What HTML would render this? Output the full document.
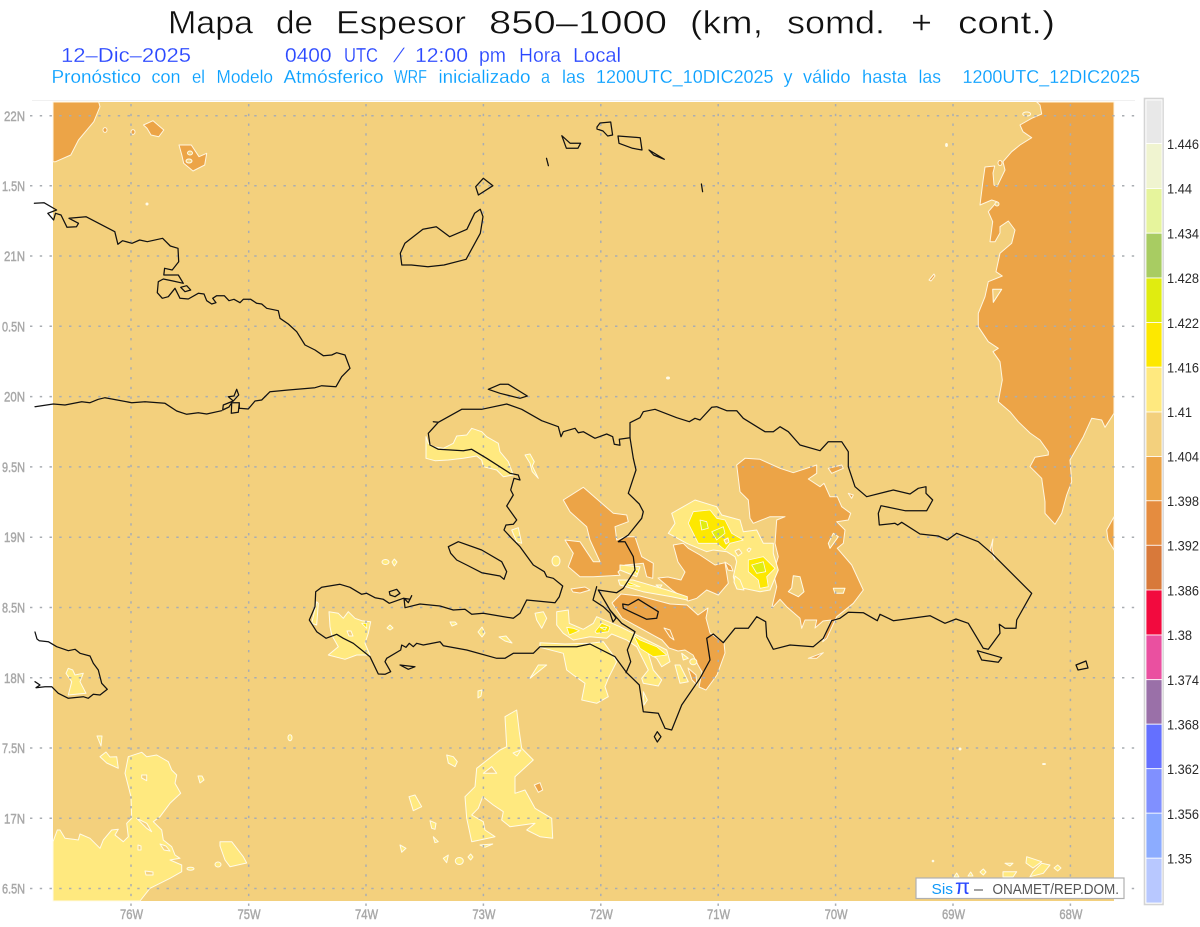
<!DOCTYPE html>
<html lang="es"><head><meta charset="utf-8"><title>Mapa de Espesor 850-1000</title>
<style>
html,body{margin:0;padding:0;background:#fff}
svg{display:block}
text{font-family:"Liberation Sans",sans-serif}
.ti{font-size:32px;fill:#111;stroke:#fff;stroke-width:.45}
.l2{font-size:20px;fill:#2a48ff;stroke:#fff;stroke-width:.2}
.l3{font-size:18px;fill:#0aa0ff;stroke:#fff;stroke-width:.15}
.g{font-size:14px;fill:#a8a8a8;stroke:#a8a8a8;stroke-width:.45}
.c{font-size:13.5px;fill:#2a2a2a}
.o{fill:#eca447;stroke:#fff6e0;stroke-width:1;stroke-linejoin:round}
.p{fill:#ffe97f;stroke:#fffbe8;stroke-width:1;stroke-linejoin:round}
.b{fill:#f3d07d;stroke:#fffbe8;stroke-width:1;stroke-linejoin:round}
.y{fill:#fde800;stroke:#fffbe8;stroke-width:.8;stroke-linejoin:round}
.m{fill:#e0ec10;stroke:#fffbe8;stroke-width:.8;stroke-linejoin:round}
.k{fill:none;stroke:#111;stroke-width:1.25;stroke-linejoin:round;stroke-linecap:round}
.gr{stroke:#a9adb2;stroke-width:1.5;stroke-dasharray:2.4 7.35;fill:none}
</style></head><body>
<svg xmlns="http://www.w3.org/2000/svg" width="1200" height="927" viewBox="0 0 1200 927">
<rect width="1200" height="927" fill="#fff"/>
<path d="M32 100.5H1135" stroke="#f0f0f0" fill="none"/>
<rect x="53" y="102" width="1061" height="799" fill="#f3d07d"/>

<!-- East orange -->
<polygon class="o" points="1036.7,102 1040,105 1041.7,114 1031.7,118.3 1020,125 1023,131.7 1031.7,137.7 1020,145 1011.7,151.7 1003,161.7 1005,170 997,186.7 994,185 993,173 994.7,166 985,167 982.7,183.3 980,205 991.7,200 997,201.7 988.3,211.7 992.7,221.7 990,241.7 995,241.7 1000,233 1000,226.7 1008.3,221 1015,230 1011.7,243.3 1000,253.3 996,271.7 1002.3,276 988.3,281.7 985,296.7 978.3,313.3 978.3,326.7 988.3,341.7 998.3,348.3 993,351.7 1000,361.7 1002.3,380 998.3,401.7 1010,411.7 1018.3,421.7 1030,433 1040,440 1048.3,451.7 1048.3,455 1035,457.3 1030,466.7 1041.7,478.3 1045,501.7 1045,513.3 1055,524.3 1061.7,513.3 1066.7,495 1071.7,481.7 1070,460 1083.3,436.7 1091.7,418.3 1101.7,420 1105,427.3 1114,413.3 1114,102"/>
<polygon class="b" points="992.7,289.3 1001.7,289.3 993.3,302.3"/>
<polygon class="o" points="1114,516.7 1106.7,530 1108,540 1114,550"/>
<ellipse class="b" cx="1026.7" cy="114" rx="4" ry="2"/>
<ellipse class="o" cx="1000" cy="163" rx="2" ry="2.5"/>
<polygon class="o" points="929,280 934,274 935,276 931,281"/>
<ellipse class="b" cx="997" cy="204" rx="2" ry="2"/>

<!-- Top-left orange -->
<polygon class="o" points="53,102 98.7,102 100,106.7 93.8,121.7 78.5,140 70.8,155 55.5,161.7 53,161.7"/>
<polygon class="o" points="143.5,125 153,120.7 163.8,130 158.8,136.7 151,135 147,128.3"/>
<polygon class="o" points="179,145 191.3,145 199,156.7 206.7,153.3 204.7,165 193,171 183.7,163.3 181.8,155"/>
<ellipse class="b" cx="190" cy="153" rx="2.5" ry="2"/><ellipse class="b" cx="189" cy="161" rx="3" ry="2"/>
<ellipse class="o" cx="133" cy="132" rx="2" ry="2.4"/><ellipse class="o" cx="105" cy="130" rx="2" ry="2.4"/>

<!-- Central DR orange -->
<polygon class="o" points="736.7,465 745,458.3 760,459.3 780,468.3 793.3,472.7 816.7,465 816.7,473.3 808.3,479 820,486.7 824,483.3 830,496.7 837.3,496.7 841.7,506.7 850.7,513.3 848.3,520 836.7,521.7 845,530 843.3,543.3 837.3,548.3 851.7,565 863.3,590 853.3,603.3 836.7,616.7 826.7,638.3 822.7,641.7 831,620 823,621 815,628 816.7,620 805,620 801.7,628.3 800,618.3 786.7,606.7 780,599.3 771.7,608.3 776.7,586.7 773.3,573.3 778.3,556.7 775,543.3 776.7,520 785,516.7 770,516.7 753.3,523.3 750,518.3 748.3,500 740,491.7"/>
<polygon class="b" points="791.7,588 793.3,575.7 800,576.7 804,591.7 798.3,596.7 788.3,591.7"/>
<polygon class="b" points="833.3,588.3 845,588.3 843.3,593.3 835,593.3"/>
<polygon class="b" points="828.3,543.3 833.3,533.3 838.3,536.7 830,548.3"/>
<polygon class="o" points="848.3,493.3 853.3,495 851.7,498.3"/>
<polygon class="o" points="828.3,468.3 841.7,465 843.3,468.3 831.7,473.3"/>
<polygon class="o" points="993,539 990,550 995,560 992,548"/>
<polygon class="o" points="808.3,658.3 823.3,652.7 816.7,658.3"/>

<!-- Haiti/border orange -->
<polygon class="o" points="563.3,500 583.3,487.3 600,501.7 613.3,513.3 626.7,515 628.3,521.7 615,526.7 616.7,540 625,536.7 635,536.7 641.7,556.7 653.3,563.3 652.7,578.3 646.7,576.7 643.3,563.3 625,565 618,572 620,575.3 593.3,576.7 580,576.7 568.3,566.7 573.3,553.3 565,540 580,541.7 593.3,561.7 600,561.7 590,540 586.7,526.7 570,511.7"/>
<polygon class="o" points="673.3,545 683.3,543.3 688.3,548.3 700,555 715,565 725,562.7 728.3,583.3 718.3,595 706.7,590 696.7,598.3 688,601 672,590 658,578 668,577 681,580 685,572 678,562"/>
<polygon class="o" points="612,603 621,594 640,596 655,600 670,604 687,605 698,615 708,608 706,618 710,633 724,643 725,653 717,675 706,690 699,687 702,672 698,665 693,655 685,650 678,651 669,648 662,640 640,628 622,618"/>
<polygon class="o" points="571,589 585,587 590,590 580,593 573,592"/>
<polygon class="o" points="688,668 696,675 697,685 692,680"/>
<polygon class="o" points="664,628 670,630 674,640 670,637"/>

<!-- Yellow cluster -->
<polygon class="p" points="671.7,513.3 695,500 716.7,506.7 721.7,515 740,520 743.3,531.7 756.7,530 763.3,543.3 773.3,543.3 773.3,553.3 778.3,570 770,590 760,591.7 743.3,588.3 736.7,588.3 733.3,576.7 736.7,561.7 735,556.7 726.7,551.7 713.3,550 706.7,551.7 686.7,543.3 668.3,533.3 675,523.3"/>
<polygon class="y" points="693.3,511.7 710,510 716.7,518.3 725,520 731.7,533.3 743.3,540 730,543.3 725,550 716.7,543.3 698.3,543.3 688.3,523.3"/>
<polygon class="m" points="700,520 706.7,521.7 708.3,528.3 701.7,530"/>
<polygon class="m" points="711.7,531.7 723.3,526.7 725,533.3 716.7,540"/>
<polygon class="y" points="748.3,560 763.3,556.7 775,568.3 766.7,576.7 768.3,586.7 760,588.3 758.3,580 748.3,571.7"/>
<polygon class="m" points="751.7,565 763.3,561.7 765.7,571.7 756.7,573.3"/>
<polygon class="p" points="735,576 740,580 744,590 737,589 734,582"/>
<polygon class="b" points="735,551 739,549 742,553 738,556"/>
<polygon class="b" points="749,548 751,549 749,552 747,550"/>
<polygon class="b" points="724,540 728,538 729,542 726,544"/>
<polygon class="o" points="725,562 731,566 733,571 728,570"/>

<!-- Haiti/S pale -->
<polygon class="p" points="426,436.7 426,458.3 435,460.7 448.3,460 463.3,458.3 476.7,456 481.7,460 483.3,466.7 496.7,470 503.3,476.7 513.3,475 508.3,461.7 500,451.7 498.3,443.3 486.7,436.7 481.7,431.7 471.7,428.3 466.7,435 456.7,436 453.3,443.3 443.3,448.3 433.3,446.7 428.3,443.3"/>
<polygon class="p" points="525,455 530,454 534.3,461.7 532.3,466 538.3,478.3 532.3,471.7 530,463.3"/>
<polygon class="p" points="511.7,530 518.3,527.7 521.7,543.3 516.7,541.7"/>
<ellipse class="p" cx="556" cy="561" rx="4" ry="5"/>
<ellipse class="p" cx="385.5" cy="562" rx="3.5" ry="2.5"/><polygon class="p" points="394.3,559 397,562 394.3,566 392,562"/>
<polygon class="p" points="329,611.7 338.3,613.3 343.3,618.3 348.3,611.7 355,618.3 361.7,620.7 370.7,621.7 368.3,633.3 365,643.3 370,655 356.7,655 345,659.3 328.3,655 338.3,646.7 331.7,635 330,626.7"/>
<polygon class="b" points="347,631 351,631 353,636 349,636"/>
<polygon class="p" points="311.7,623.3 316.7,601.7 318.3,603.3 316.7,625"/>
<polygon class="y" points="361.7,623.3 366.7,623.3 366.7,628.3"/>
<polygon class="p" points="450,622 455,622 457,624 452,626"/>
<polygon class="p" points="390,625 393,628 390,630 387,628"/>
<polygon class="p" points="478,632 482,627 485,633 482,637"/>
<polygon class="p" points="535,613.3 543.3,611.7 546.7,618.3 541.7,628.3 536.7,620"/>
<polygon class="p" points="499,637 506,636 512,643 505,641"/>
<polygon class="p" points="530,678.3 546.7,665 538.3,665"/>
<polygon class="p" points="556.7,611.7 568.3,610 569.3,623.3 583.3,629.3 593.3,623.3 596.7,616.7 608.3,621.7 620,626.7 633.3,633.3 666.7,650 670,661.7 661.7,666.7 656.7,658.3 648.3,653.3 653.3,670 661.7,680 658.3,686 643.3,683.3 641.7,678.3 648.3,670 636.7,646.7 626.7,640 611.7,634 606.7,638.3 590,636.7 573.3,640 563.3,633.3 556.7,625"/>
<polygon class="p" points="540,642.7 565,644 590,643.3 603.3,641.7 611.7,653.3 616.7,661.7 608.3,678.3 605,686.7 608.3,696.7 596.7,703.3 581.7,700 585,683.3 573.3,675 566.7,670 563.3,653.3 540,647.3"/>
<polygon class="y" points="566.7,627.3 573.3,628.3 579.3,630.7 569.3,635"/>
<polygon class="y" points="595,631.7 601.7,623.3 610,626.7 608.3,631.7 596.7,633.3"/>
<polygon class="m" points="600,627.3 606.7,627.3 605,630"/>
<polygon class="y" points="633.3,635 640,640 656.7,646.7 666.7,655 653.3,656.7 640,648.3"/>
<polygon class="p" points="643.3,691.7 647.3,700 644,705"/>
<polygon class="p" points="675,665 680,665 688.3,681.7 680,683.3"/>
<polygon class="p" points="681.7,653.3 688.3,658.3 683.3,660"/>
<ellipse class="p" cx="693.3" cy="661.7" rx="3.5" ry="3"/>
<polygon class="p" points="618.3,580 633,580 667,590 687.3,596.7 687.3,600 671.7,596.7 643,591.7 620,585"/>
<polygon class="y" points="626.7,581.7 640,586.7 628.3,585"/>
<polygon class="p" points="620,565 640,566.7 636.7,576.7 620,570"/>
<polygon class="y" points="634,570 639,570 637,574"/>
<polygon class="p" points="656,585 662,585 660,588"/>

<!-- South pale -->
<polygon class="p" points="505,716.7 516.7,710 519.3,731.7 521.7,748.3 533.3,760 515,776.7 515,793.3 525,790 535,808.3 551.7,818.3 552.7,838.3 540,836.7 526.7,830 535,823.3 510,826.7 501.7,820 503.3,811.7 493.3,805 482.7,796.7 478.3,808.3 471.7,815 483.3,821.7 485,830 495,836.7 471.7,841.7 466.7,818.3 465,796.7 475,786.7 476.7,768.3 500,750 506.7,746.7"/>
<polygon class="b" points="483.3,773.3 491.7,766.7 496.7,773.3"/>
<polygon class="o" points="534.3,785 540,782.7 542.7,790 538.3,792.3"/>
<polygon class="p" points="409,796.7 415,795 421.7,806.7 413.3,810.7"/>
<polygon class="p" points="446.7,755 453.3,756.7 457.3,761.7 455,766.7 448.3,763"/>
<polygon class="p" points="430,820.7 436,823.3 435,829.3 431.7,828.3"/>
<polygon class="p" points="433.3,836.7 438.3,841.7 435,842.7"/>
<polygon class="p" points="400,845 406,848.3 401.7,852.3"/>
<polygon class="p" points="443.3,858.3 448.3,855 446.7,862.7"/>
<ellipse class="p" cx="459.3" cy="861" rx="4" ry="3.5"/>
<polygon class="p" points="470.7,854 473,857 470.7,860 468,857"/>
<polygon class="p" points="480,845 492.7,844 485,847.3"/>
<polygon class="p" points="478,691 482,690 481,696 478,698"/>
<polygon class="p" points="513,753 517,756 521,750"/>

<!-- SW pale -->
<polygon class="p" points="53,901 53,841.7 57.3,830 60,830 65,838.3 73.3,839.3 78.3,840 80,834 90,838.3 100,848.3 103.3,840 111.7,830 118.3,829.3 115,835 123.3,841.7 128.3,836.7 126.7,823.3 131.7,818.3 131,796.7 125,773.3 128.3,756.7 141.7,752.3 146.7,756.7 156.7,755 168.3,761.7 171.7,770 176.7,775 175,783.3 180.7,793.3 170,803.3 160,816.7 153.3,821.7 161.7,830 163.3,840 171.7,846.7 175,855 180,858.3 170,860 181.7,865 181.7,871.7 170,878.3 150,888.3 140,901"/>
<polygon class="b" points="136.7,818.3 146.7,823.3 151.7,831.7 146.7,828.3"/>
<polygon class="b" points="141.7,775 146.7,775 146.7,780.7 141.7,778"/>
<polygon class="b" points="145,871 153,872 153,875 146,875"/>
<polygon class="b" points="138,845 141,846 141,850 138,850"/>
<polygon class="b" points="160,844 166,846 170,851 164,850"/>
<polygon class="p" points="220,841.7 231.7,841.7 243.3,856.7 246.7,863 230,866.7 225,860 220,846"/>
<ellipse class="p" cx="218" cy="864.5" rx="3" ry="2.5"/>
<ellipse class="p" cx="290" cy="737.7" rx="2" ry="3"/>
<polygon class="p" points="198,776 202,776 204,780 200,783"/>
<polygon class="p" points="100,756.7 106,752 110,757 116.7,756.7 118.3,768.3 106.7,763"/>
<polygon class="p" points="97,736 102,736 101,746"/>
<ellipse class="p" cx="190.5" cy="868.7" rx="3.5" ry="1.5"/>
<polygon class="p" points="68.3,668.3 72.7,670 75,675 83.3,673.3 80,681.7 86,693.3 68.3,695 71.7,681.7 66,673.3"/>

<!-- SE pale bits -->
<polygon class="p" points="1026.7,856.7 1041.7,861.7 1033,868 1026,863"/>
<polygon class="p" points="1041.7,863.3 1050,865 1043.3,873.3 1030,876.7 1033,871.7"/>
<polygon class="p" points="1005,863.3 1013,863.3 1010,866"/>
<polygon class="p" points="1003,871.7 1016.7,871.7 1013,877 1003,877"/>
<polygon class="p" points="1057.7,865 1061,868 1057.7,871 1054,868"/>
<polygon class="p" points="983.3,869 986,872 983.3,875 980,872"/>
<polygon class="p" points="970.7,872 973,876 968,876"/>
<polygon class="p" points="956.7,873 959,877 954,877"/>
<ellipse cx="933" cy="861" rx="1.3" ry="1.3" fill="#fffbe8"/>
<ellipse cx="946.5" cy="145" rx="1.4" ry="2" fill="#fffbe8"/>
<ellipse cx="668" cy="378" rx="2" ry="1.5" fill="#fffbe8"/>
<ellipse cx="147" cy="204" rx="1.5" ry="1.5" fill="#fffbe8"/>
<ellipse cx="960" cy="749" rx="1.5" ry="1.5" fill="#fffbe8"/>
<ellipse cx="1044" cy="764" rx="2" ry="1" fill="#fffbe8"/>

<!-- Grid -->
<g class="gr">
<path d="M30 115.7H1136M30 185.8H1136M30 256H1136M30 326.3H1136M30 396.6H1136M30 466.9H1136M30 537.2H1136M30 607.5H1136M30 677.8H1136M30 748H1136M30 818.3H1136M30 888.5H1136"/>
<path d="M131 104V906M248.7 104V906M366 104V906M483.4 104V906M600.8 104V906M718.2 104V906M835.6 104V906M953 104V906M1070.4 104V906"/>
</g>

<!-- Coasts -->
<g class="k">
<polyline points="34.4,203.3 44,202.7 56.6,210 47.8,213.3 53.6,220 55.5,213.3 61,215 67,227.3 76.5,226.7 78.5,223.3 69,218.3 86,216.7 114.8,231.7 117.9,244.3 122.5,240.7 132,243.3 139.7,240 147.3,241.7 162.6,238.3 170.3,246 178,248.3 178.7,261.7 172.2,270 164.6,268.3 163.8,275 178.3,275 183.3,283.3 173,281 163.3,279 158.3,281.7 157.3,292.7 162.3,298.3 168.3,296.7 175,288.3 180,298.3 188.3,299 198.3,293.3 204,294 206.7,300.7 211.7,304 216,302.7 212.7,298.3 216.7,295.7 224.3,295.7 229,300.7 234,299.3 240,302.7 243.3,299.3 250.7,299.3 256.7,303.3 261.7,304 266.7,308.3 278.3,310.7 280,318.3 288.3,324 296.7,331.7 305,345 315,350 323.3,355.7 331.7,355 336.7,352.7 345,355 350,368.3 341.7,376.7 336,386.7 321.7,385.7 315,387.7 288.3,390 270,391.7 261.7,400 255,401 248.3,409 239.3,408.3 239.3,402.7 231.7,402.7 231.3,413.3 238.3,412.3 239.3,402.7"/>
<polyline points="233.3,401 228.3,396.7 234,396 236.7,389.3 238.7,395 233.3,401 223.3,405 222.7,410 229,407 231.7,402.7"/>
<polyline points="221.7,410.7 206.7,414 198.3,412.7 186.7,414.3 176.7,411 165,403.3 145,401.7 131.7,402.7 105,397.7 98.3,399.3 90,402.7 81.7,401.7 65,405 53.3,404 35,406.7"/>
<polygon points="180.7,287.3 186.7,285.7 190.7,290 185,291.7"/>
<polygon points="404.9,243.3 422.9,229.3 436.3,226.7 449.7,236.7 466.9,229.3 474.6,213.3 480.3,209.3 483,216.7 480.3,233.3 466.1,259.3 444,265 427.9,266.7 411.4,265 401.8,265 400.3,253.3"/>
<polygon points="483.3,178.3 492.9,185.7 478.4,195 475.7,186.7"/>
<polyline points="546.5,158.3 548.4,165.7"/>
<polygon points="561.8,135.7 570.2,143.3 580.6,143.3 577.9,148.3 566.4,148.3"/>
<polygon points="597,127 600,123 610.7,122 612.6,135 607.7,136 603,131 597,129"/>
<polygon points="618,136 640.2,137.7 642,150 632.5,148.3 619,143.3"/>
<polygon points="649,150 664.3,159.3 653.6,155"/>
<polyline points="701.4,184 702.6,191.7"/>
<polygon points="433.3,421.7 438.3,422.3 461.7,409.3 481.7,409.3 506.7,404 521.7,409.3 541.7,420.7 558.3,426.7 561,436.7 563.3,431.7 575,428.3 578.3,432.7 583.3,431.7 595,438.3 606.7,434 612.7,436.7 614.3,444.3 620,445.3 619.3,439.3 630,437.7 630,422.7 640,417.7 643.3,411.7 655,409.3 676.7,417.7 689.3,421.7 695,418.3 700,420 711.7,407.3 716.7,406.7 726.7,410.7 736.7,410.7 743.3,418.3 765,431.7 773.3,431.7 780,426.7 788.3,431.7 800,445 820,450.7 828.3,441.7 841.7,441.7 848.3,451.7 848.3,466.7 855,486.7 866.7,496.7 893.3,490 910,494 918.3,488.3 926,486.7 926,493.3 932.7,500 926.7,510.7 905,510.7 881,505.7 878.3,513.3 879.3,525 895,523.3 897.7,525 901.7,522.3 920,534 938.3,536 947.3,540 956.7,533.3 978.3,541.7 991.7,553.3 1031.7,593.3 1016.7,620 1016,628.3 1005,628.3 999.3,624.3 1000,633.3 988.3,649.3 983.3,648.3 968.3,623.3 956,619 945,623.3 930,615.7 893.3,620.7 880,614.3 877.3,620.7 863.3,612.7 848.3,612.3 840,618.3 831.7,620.7 823.3,638.3 813.3,646.7 790,645 773.3,649.3 766.7,636.7 765.7,621.7 756.7,616.7 748.3,628.3 735,628.3 723.3,642.7 713.3,634 706.7,638.3 710,660 700,678.3 681.7,705 671.7,730 665,728.3 658.3,713.3 643.3,711.7 639.3,685 626.7,672.7 615,656.7 590,644 576.7,646.7 553.3,646.7 540,646.7 533.3,653.3 513.3,653.3 505,658.3 496.7,658.3 466.7,650 443.3,645.7 440,641.7 423.3,645 416.7,643.3 413.3,646.7 409.3,643.3 406,647.3 401.7,645 400.7,650 386.7,658.3 385,661.7 390.7,671.7 385,674.3 378.3,674 370,656.7 353.3,643.3 343.3,638.3 336.7,634.3 326,638.3 316.7,631.7 309.3,620 315,606.7 315.7,591.7 321.7,587.3 340,584.3 350,587.3 361.7,594.3 366.7,593.3 375,597.7 383.3,599.3 389.3,603.3 403.3,598.3 410,599.3 411.7,595.7 408.3,602.7 404,598.3 405,607.7 420,604 440,606 453.3,610 465,609.3 471.7,614.3 483.3,613.3 513.3,618.3 520,613.3 526.7,600 555,602.7 559.3,596.7 562.7,586 553.3,578.3 546.7,576.7 544.3,571.7 533.3,565 520,546.7 511.7,538.3 504,530 506,525 513.3,524.3 516.7,520 506.7,506 513.3,495 510.7,490 514,478.3 520,480 518.3,475 510,473.3 486.7,458.3 471.7,449.3 463.3,450.7 438.3,449.3 430,445 428.3,433.3 438.3,422.3"/>
<polyline points="630,437.7 633.3,458.3 636,470 628.3,493.3 639.3,504 643.3,511.7 641.7,518.3 628.3,535 618.3,541.7 625,541.7 633.3,556.7 635,570 623.3,588.3 616.7,592.7 603.3,590.7 598.3,590 610,610 621.7,623.3 635,631.7 627.3,650 630.7,661.7 626,672.7"/>
<polyline points="596.7,586.7 593,600 603.3,606.7 610,613 613,622 616,618 610,610"/>
<polygon points="622.7,604 623.3,608.3 646.7,619.3 656.7,618.3 658.3,611.7 638.3,599.3 628.3,605"/>
<polygon points="448.3,546.7 458.3,541.7 481.7,550 501.7,561.7 506.7,571.7 504,579.3 500,576 481.7,572.7 466.7,565 456.7,560 450.7,553.3"/>
<polygon points="488.3,389.3 500,384.3 508.3,384.3 527.3,396 520,398.3 500,393.3"/>
<polygon points="389.3,591.7 396.7,589.3 400,593.3 395,596.7 390,595"/>
<polygon points="400,665 415,666.7 408.3,669.3"/>
<polygon points="977.3,650.7 1001.7,657.7 998.3,662.3 981.7,660"/>
<polygon points="657.3,731.7 661,736.7 657.3,742 654.3,736.7"/>
<polygon points="1076,665 1086,661 1088,668 1078,670"/>
<polyline points="35,632 37,639 39.3,640.7 48.3,641.7 56.7,646.7 68.3,650.7 75,649.3 80,653.3 90,656 93.3,663.3 98.3,670 101.7,683.3 107.3,689.3 100,695 93.3,694.3 88.3,698.3 83.3,696.7 68.3,698.3 58.3,693.3 51.7,686.7 45,686.7 36,687.7 40,685 35,681.7"/>
</g>

<!-- Axis labels -->
<text class="g" x="4" y="120.8" textLength="21" lengthAdjust="spacingAndGlyphs">22N</text>
<text class="g" x="2" y="190.8" textLength="23" lengthAdjust="spacingAndGlyphs">1.5N</text>
<text class="g" x="4" y="261" textLength="21" lengthAdjust="spacingAndGlyphs">21N</text>
<text class="g" x="2" y="331.3" textLength="23" lengthAdjust="spacingAndGlyphs">0.5N</text>
<text class="g" x="4" y="401.6" textLength="21" lengthAdjust="spacingAndGlyphs">20N</text>
<text class="g" x="2" y="471.9" textLength="23" lengthAdjust="spacingAndGlyphs">9.5N</text>
<text class="g" x="4" y="542.2" textLength="21" lengthAdjust="spacingAndGlyphs">19N</text>
<text class="g" x="2" y="612.5" textLength="23" lengthAdjust="spacingAndGlyphs">8.5N</text>
<text class="g" x="4" y="682.8" textLength="21" lengthAdjust="spacingAndGlyphs">18N</text>
<text class="g" x="2" y="753" textLength="23" lengthAdjust="spacingAndGlyphs">7.5N</text>
<text class="g" x="4" y="823.3" textLength="21" lengthAdjust="spacingAndGlyphs">17N</text>
<text class="g" x="2" y="893.5" textLength="23" lengthAdjust="spacingAndGlyphs">6.5N</text>
<text class="g" x="120" y="919" textLength="23" lengthAdjust="spacingAndGlyphs">76W</text>
<text class="g" x="237.5" y="919" textLength="23" lengthAdjust="spacingAndGlyphs">75W</text>
<text class="g" x="355" y="919" textLength="23" lengthAdjust="spacingAndGlyphs">74W</text>
<text class="g" x="472.4" y="919" textLength="23" lengthAdjust="spacingAndGlyphs">73W</text>
<text class="g" x="589.8" y="919" textLength="23" lengthAdjust="spacingAndGlyphs">72W</text>
<text class="g" x="707" y="919" textLength="23" lengthAdjust="spacingAndGlyphs">71W</text>
<text class="g" x="824.6" y="919" textLength="23" lengthAdjust="spacingAndGlyphs">70W</text>
<text class="g" x="942" y="919" textLength="23" lengthAdjust="spacingAndGlyphs">69W</text>
<text class="g" x="1059.4" y="919" textLength="23" lengthAdjust="spacingAndGlyphs">68W</text>

<!-- Title -->
<text class="ti" x="168" y="33.5" textLength="85" lengthAdjust="spacingAndGlyphs">Mapa</text>
<text class="ti" x="276" y="33.5" textLength="37" lengthAdjust="spacingAndGlyphs">de</text>
<text class="ti" x="336" y="33.5" textLength="130" lengthAdjust="spacingAndGlyphs">Espesor</text>
<text class="ti" x="489" y="33.5" textLength="178" lengthAdjust="spacingAndGlyphs">850–1000</text>
<text class="ti" x="690" y="33.5" textLength="73" lengthAdjust="spacingAndGlyphs">(km,</text>
<text class="ti" x="787" y="33.5" textLength="98" lengthAdjust="spacingAndGlyphs">somd.</text>
<text class="ti" x="911" y="33.5" textLength="21" lengthAdjust="spacingAndGlyphs">+</text>
<text class="ti" x="958" y="33.5" textLength="97" lengthAdjust="spacingAndGlyphs">cont.)</text>
<text class="l2" x="61" y="62" textLength="130" lengthAdjust="spacingAndGlyphs">12–Dic–2025</text>
<text class="l2" x="285" y="62" textLength="46.5" lengthAdjust="spacingAndGlyphs">0400</text>
<text class="l2" x="344" y="62" textLength="34" lengthAdjust="spacingAndGlyphs">UTC</text>
<text class="l2" transform="translate(393,62) skewX(-24)">/</text>
<text class="l2" x="415" y="62" textLength="53" lengthAdjust="spacingAndGlyphs">12:00</text>
<text class="l2" x="479" y="62" textLength="27" lengthAdjust="spacingAndGlyphs">pm</text>
<text class="l2" x="519" y="62" textLength="42" lengthAdjust="spacingAndGlyphs">Hora</text>
<text class="l2" x="573" y="62" textLength="48" lengthAdjust="spacingAndGlyphs">Local</text>
<text class="l3" x="51.5" y="82.8" textLength="89.5" lengthAdjust="spacingAndGlyphs">Pronóstico</text>
<text class="l3" x="151.5" y="82.8" textLength="29" lengthAdjust="spacingAndGlyphs">con</text>
<text class="l3" x="192" y="82.8" textLength="13" lengthAdjust="spacingAndGlyphs">el</text>
<text class="l3" x="216.5" y="82.8" textLength="56.5" lengthAdjust="spacingAndGlyphs">Modelo</text>
<text class="l3" x="283.5" y="82.8" textLength="100" lengthAdjust="spacingAndGlyphs">Atmósferico</text>
<text class="l3" x="394" y="82.8" textLength="33" lengthAdjust="spacingAndGlyphs">WRF</text>
<text class="l3" x="438.5" y="82.8" textLength="92" lengthAdjust="spacingAndGlyphs">inicializado</text>
<text class="l3" x="541" y="82.8" textLength="9" lengthAdjust="spacingAndGlyphs">a</text>
<text class="l3" x="562" y="82.8" textLength="23" lengthAdjust="spacingAndGlyphs">las</text>
<text class="l3" x="596" y="82.8" textLength="177.5" lengthAdjust="spacingAndGlyphs">1200UTC_10DIC2025</text>
<text class="l3" x="783.5" y="82.8" textLength="9" lengthAdjust="spacingAndGlyphs">y</text>
<text class="l3" x="803" y="82.8" textLength="47.5" lengthAdjust="spacingAndGlyphs">válido</text>
<text class="l3" x="862" y="82.8" textLength="45" lengthAdjust="spacingAndGlyphs">hasta</text>
<text class="l3" x="918.5" y="82.8" textLength="22.5" lengthAdjust="spacingAndGlyphs">las</text>
<text class="l3" x="962.5" y="82.8" textLength="177.5" lengthAdjust="spacingAndGlyphs">1200UTC_12DIC2025</text>

<!-- Credit box -->
<rect x="916" y="878" width="208" height="20.5" fill="#fff" stroke="#b0b0b0" stroke-width="1.2"/>
<text x="931.5" y="894" font-size="15" fill="#1098f8" textLength="21.5" lengthAdjust="spacingAndGlyphs">Sis</text>
<text x="955" y="894" font-size="21" fill="#2a48ff" textLength="15" lengthAdjust="spacingAndGlyphs">π</text>
<text x="974" y="894" font-size="15" fill="#444" textLength="9" lengthAdjust="spacingAndGlyphs">–</text>
<text x="992.5" y="894" font-size="15" fill="#555" textLength="126.5" lengthAdjust="spacingAndGlyphs">ONAMET/REP.DOM.</text>

<!-- Colorbar -->
<rect x="1144.5" y="98.5" width="18.5" height="806" fill="#fff" stroke="#d4d4d4" stroke-width="1.6"/>
<g stroke="#fff" stroke-width=".8">
<rect x="1146" y="100" width="16" height="43.5" fill="#e8e8e8"/>
<rect x="1146" y="143.5" width="16" height="45" fill="#f0f4d0"/>
<rect x="1146" y="188.5" width="16" height="44.7" fill="#e6f49c"/>
<rect x="1146" y="233.2" width="16" height="44.8" fill="#a8cc62"/>
<rect x="1146" y="278" width="16" height="44.5" fill="#e0ec10"/>
<rect x="1146" y="322.5" width="16" height="44.7" fill="#fde800"/>
<rect x="1146" y="367.2" width="16" height="44.8" fill="#ffe97f"/>
<rect x="1146" y="412" width="16" height="44.5" fill="#f3d07d"/>
<rect x="1146" y="456.5" width="16" height="44.3" fill="#eca447"/>
<rect x="1146" y="500.8" width="16" height="44.5" fill="#e58c3f"/>
<rect x="1146" y="545.3" width="16" height="44.7" fill="#d8793a"/>
<rect x="1146" y="590" width="16" height="45" fill="#f20a3e"/>
<rect x="1146" y="635" width="16" height="44.7" fill="#ea50a0"/>
<rect x="1146" y="679.7" width="16" height="44.5" fill="#9a70a8"/>
<rect x="1146" y="724.2" width="16" height="44.5" fill="#6470ff"/>
<rect x="1146" y="768.7" width="16" height="44.5" fill="#8090ff"/>
<rect x="1146" y="813.2" width="16" height="45" fill="#8cacff"/>
<rect x="1146" y="858.2" width="16" height="44.8" fill="#b8c8ff"/>
</g>
<text class="c" x="1167" y="149" textLength="32" lengthAdjust="spacingAndGlyphs">1.446</text>
<text class="c" x="1167" y="193.5" textLength="25" lengthAdjust="spacingAndGlyphs">1.44</text>
<text class="c" x="1167" y="238.3" textLength="32" lengthAdjust="spacingAndGlyphs">1.434</text>
<text class="c" x="1167" y="283" textLength="32" lengthAdjust="spacingAndGlyphs">1.428</text>
<text class="c" x="1167" y="327.8" textLength="32" lengthAdjust="spacingAndGlyphs">1.422</text>
<text class="c" x="1167" y="372.5" textLength="32" lengthAdjust="spacingAndGlyphs">1.416</text>
<text class="c" x="1167" y="417" textLength="25" lengthAdjust="spacingAndGlyphs">1.41</text>
<text class="c" x="1167" y="461.6" textLength="32" lengthAdjust="spacingAndGlyphs">1.404</text>
<text class="c" x="1167" y="506" textLength="32" lengthAdjust="spacingAndGlyphs">1.398</text>
<text class="c" x="1167" y="550.5" textLength="32" lengthAdjust="spacingAndGlyphs">1.392</text>
<text class="c" x="1167" y="595.5" textLength="32" lengthAdjust="spacingAndGlyphs">1.386</text>
<text class="c" x="1167" y="640" textLength="25" lengthAdjust="spacingAndGlyphs">1.38</text>
<text class="c" x="1167" y="685" textLength="32" lengthAdjust="spacingAndGlyphs">1.374</text>
<text class="c" x="1167" y="729.5" textLength="32" lengthAdjust="spacingAndGlyphs">1.368</text>
<text class="c" x="1167" y="774" textLength="32" lengthAdjust="spacingAndGlyphs">1.362</text>
<text class="c" x="1167" y="819" textLength="32" lengthAdjust="spacingAndGlyphs">1.356</text>
<text class="c" x="1167" y="863.5" textLength="25" lengthAdjust="spacingAndGlyphs">1.35</text>
</svg>
</body></html>
